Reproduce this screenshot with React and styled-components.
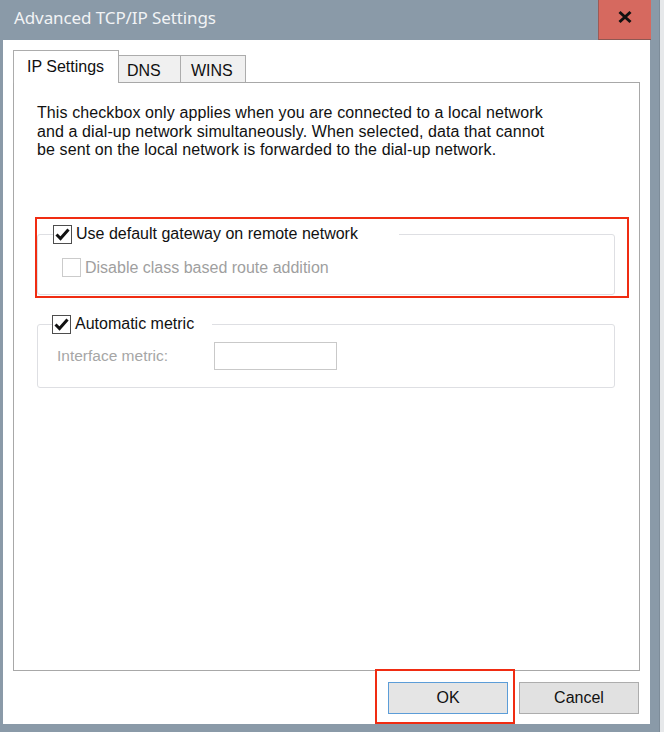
import React from "react";
import styled, { createGlobalStyle } from "styled-components";

const GlobalStyle = createGlobalStyle`
  *, *::before, *::after {
    box-sizing: border-box;
  }
  html, body {
    margin: 0;
    padding: 0;
  }
  body {
    font-family: "Liberation Sans", Arial, sans-serif;
    font-size: 16px;
    color: #111;
  }
`;

const Screen = styled.div`
  display: flex;
  width: 664px;
  height: 732px;
  overflow: hidden;
  background: #e3e6e9;
`;

const Window = styled.div`
  width: 659px;
  flex-shrink: 0;
  display: flex;
  flex-direction: column;
  background: #8a9aa8;
  padding: 0 9px 8px 3px;
`;

const TitleBar = styled.div`
  height: 40px;
  display: flex;
  justify-content: space-between;
  align-items: stretch;
  flex-shrink: 0;
`;

const Title = styled.div`
  padding: 6px 0 0 11px;
  font-family: "Noto Sans", "Liberation Sans", sans-serif;
  font-size: 17px;
  color: #f1f3f5;
  letter-spacing: -0.1px;
`;

const CloseButton = styled.div`
  width: 53px;
  height: 40px;
  margin-right: -1px;
  background: #d6695f;
  border-left: 1px solid #9c5a55;
  border-bottom: 1px solid #8d5853;
  display: flex;
  justify-content: center;
  padding-top: 10px;
`;

const Body = styled.div`
  flex: 1;
  background: #fff;
  display: flex;
  flex-direction: column;
  padding: 10px;
`;

const TabRow = styled.div`
  height: 32px;
  display: flex;
  align-items: flex-end;
  flex-shrink: 0;
`;

const Tab = styled.div`
  width: ${(p) => p.$width}px;
  height: ${(p) => (p.$active ? 33 : 27)}px;
  margin-bottom: ${(p) => (p.$active ? -1 : 0)}px;
  padding: ${(p) => (p.$active ? 6 : 5)}px 0 0 ${(p) => p.$pad}px;
  line-height: 20px;
  background: ${(p) => (p.$active ? "#fff" : "#f0f0f0")};
  border: 1px solid #acacac;
  border-bottom: none;
  border-left: ${(p) => (p.$noLeft ? "none" : "1px solid #acacac")};
  position: relative;
  z-index: ${(p) => (p.$active ? 1 : 0)};
`;

const Panel = styled.div`
  flex: 1;
  border: 1px solid #a8a8a8;
  padding: 21px 24px 0 23px;
  display: flex;
  flex-direction: column;
`;

const Note = styled.p`
  margin: 0;
  line-height: 18.5px;
  white-space: nowrap;
  letter-spacing: 0.1px;
`;

const Marked = styled.div`
  position: relative;
  margin-top: ${(p) => p.$top || 0}px;
`;

const RedFrame = styled.span`
  position: absolute;
  top: ${(p) => p.$t}px;
  left: ${(p) => p.$l}px;
  right: ${(p) => p.$r}px;
  bottom: ${(p) => p.$b}px;
  border: 2px solid #f02c12;
  pointer-events: none;
  z-index: 2;
`;

const Group = styled.fieldset`
  margin: ${(p) => p.$top || 0}px 0 0 0;
  padding: 0;
  min-width: 0;
  border: 1px solid #dedfe3;
  border-radius: 3px;
`;

const Legend = styled.legend`
  display: flex;
  align-items: center;
  gap: 4px;
  width: ${(p) => p.$width}px;
  height: 21px;
  margin-left: ${(p) => p.$left}px;
  padding: 0;
`;

const GroupContent = styled.div`
  display: flex;
  align-items: center;
  padding: ${(p) => p.$pad};
`;

const Box = styled.span`
  width: 19px;
  height: 19px;
  flex-shrink: 0;
  border: 1px solid ${(p) => (p.$disabled ? "#cbcbcb" : "#4d4d4d")};
  background: #fff;
  display: flex;
  align-items: center;
  justify-content: center;
`;

const Label = styled.span`
  color: ${(p) => (p.$disabled ? "#9f9f9f" : "#111")};
  line-height: 20px;
  white-space: nowrap;
  margin-left: ${(p) => p.$gap || 0}px;
`;

const MetricLabel = styled.span`
  color: #a6a6a6;
  width: 157px;
  font-size: 15.5px;
`;

const MetricInput = styled.div`
  width: 123px;
  height: 28px;
  border: 1px solid #c9c9c9;
  background: #fff;
`;

const ButtonRow = styled.div`
  display: flex;
  justify-content: flex-end;
  gap: 11px;
  margin-top: 11px;
  padding-right: 1px;
  flex-shrink: 0;
`;

const Button = styled.div`
  width: 120px;
  height: 32px;
  display: flex;
  align-items: center;
  justify-content: center;
  background: ${(p) => (p.$primary ? "#e5e5e5" : "#e1e1e1")};
  border: 1px solid ${(p) => (p.$primary ? "#5c9dd8" : "#adadad")};
`;

const Backdrop = styled.div`
  flex: 1;
  border-left: 1px solid #7d8c99;
  background: #e6e8ea;
`;

const CloseIcon = () => (
  <svg width="16" height="14" viewBox="0 0 16 14">
    <path d="M2.5 2 L13.5 12 M13.5 2 L2.5 12" stroke="#111" strokeWidth="3" />
  </svg>
);

const Checkbox = ({ checked, disabled }) => (
  <Box $disabled={disabled}>
    {checked && (
      <svg width="15" height="13" viewBox="0 0 15 13">
        <path d="M1.5 6.5 L5.5 10.5 L13.5 1.5" fill="none" stroke="#111" strokeWidth="3" />
      </svg>
    )}
  </Box>
);

export default function App() {
  return (
    <>
      <GlobalStyle />
      <Screen>
        <Window>
          <TitleBar>
            <Title>Advanced TCP/IP Settings</Title>
            <CloseButton>
              <CloseIcon />
            </CloseButton>
          </TitleBar>
          <Body>
            <TabRow>
              <Tab $active $width={106} $pad={13}>IP Settings</Tab>
              <Tab $noLeft $width={62} $pad={8}>DNS</Tab>
              <Tab $noLeft $width={65} $pad={10}>WINS</Tab>
            </TabRow>
            <Panel>
              <Note>
                This checkbox only applies when you are connected to a local network
                <br />
                and a dial-up network simultaneously. When selected, data that cannot
                <br />
                be sent on the local network is forwarded to the dial-up network.
              </Note>

              <Marked $top={64}>
                <RedFrame $t={-7} $l={-2} $r={-14} $b={-3} />
                <Group>
                  <Legend $left={15} $width={346}>
                    <Checkbox checked />
                    <Label>Use default gateway on remote network</Label>
                  </Legend>
                  <GroupContent $pad="13px 0 16px 24px">
                    <Checkbox disabled />
                    <Label $disabled $gap={4}>
                      Disable class based route addition
                    </Label>
                  </GroupContent>
                </Group>
              </Marked>

              <Group $top={19}>
                <Legend $left={14} $width={160}>
                  <Checkbox checked />
                  <Label>Automatic metric</Label>
                </Legend>
                <GroupContent $pad="7px 0 17px 19px">
                  <MetricLabel>Interface metric:</MetricLabel>
                  <MetricInput />
                </GroupContent>
              </Group>
            </Panel>
            <ButtonRow>
              <Marked>
                <RedFrame $t={-13} $l={-13} $r={-7} $b={-10} />
                <Button $primary>OK</Button>
              </Marked>
              <Button>Cancel</Button>
            </ButtonRow>
          </Body>
        </Window>
        <Backdrop />
      </Screen>
    </>
  );
}
